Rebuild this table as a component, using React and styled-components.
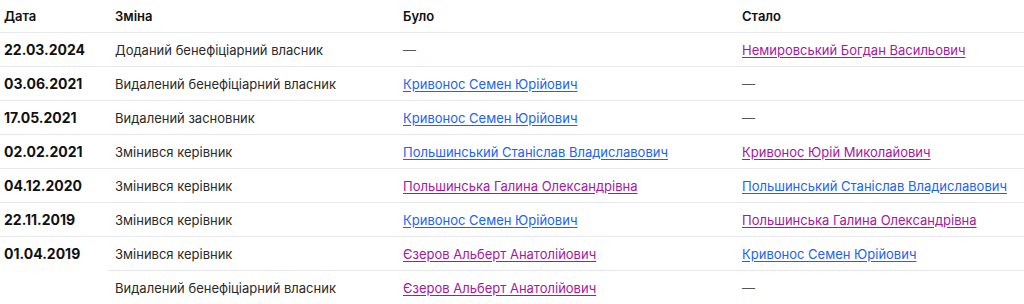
import React from "react";
import styled, { createGlobalStyle } from "styled-components";

const rows = [
  { date: "22.03.2024", change: "Доданий бенефіціарний власник", was: null, now: { name: "Немировський Богдан Васильович", visited: true } },
  { date: "03.06.2021", change: "Видалений бенефіціарний власник", was: { name: "Кривонос Семен Юрійович" }, now: null },
  { date: "17.05.2021", change: "Видалений засновник", was: { name: "Кривонос Семен Юрійович" }, now: null },
  { date: "02.02.2021", change: "Змінився керівник", was: { name: "Польшинський Станіслав Владиславович" }, now: { name: "Кривонос Юрій Миколайович", visited: true } },
  { date: "04.12.2020", change: "Змінився керівник", was: { name: "Польшинська Галина Олександрівна", visited: true }, now: { name: "Польшинський Станіслав Владиславович" } },
  { date: "22.11.2019", change: "Змінився керівник", was: { name: "Кривонос Семен Юрійович" }, now: { name: "Польшинська Галина Олександрівна", visited: true } },
  { date: "01.04.2019", span: 2, change: "Змінився керівник", was: { name: "Єзеров Альберт Анатолійович", visited: true }, now: { name: "Кривонос Семен Юрійович" } },
  { change: "Видалений бенефіціарний власник", was: { name: "Єзеров Альберт Анатолійович", visited: true }, now: null },
];

const GlobalStyle = createGlobalStyle`
  body {
    margin: 0;
    background: #fff;
    font-family: Inter, "Noto Sans", sans-serif;
    color: #1c1c1e;
  }
`;

const Table = styled.table`
  width: 1024px;
  border-collapse: collapse;
  table-layout: fixed;
  font-size: 13px;
`;

const HeadCell = styled.th`
  height: 32px;
  padding: 0 7px;
  text-align: left;
  font-weight: 600;
  color: #111;
  border-bottom: 1px solid #e6e8ec;
  &:first-child {
    padding-left: 4px;
  }
`;

const Cell = styled.td`
  height: 33px;
  padding: 0 7px;
  vertical-align: middle;
  color: #2a2a2a;
  border-bottom: ${(p) => (p.last ? "none" : "1px solid #e6e8ec")};
`;

const DateCell = styled(Cell)`
  padding-left: 4px;
  font-weight: 700;
  font-size: 14px;
  color: #111;
  vertical-align: ${(p) => (p.rowSpan > 1 ? "top" : "middle")};
  padding-top: ${(p) => (p.rowSpan > 1 ? "8px" : "0")};
`;

const PersonLink = styled.a`
  color: ${(p) => (p.$visited ? "#a7179f" : "#1b63f5")};
  text-decoration: underline;
  text-underline-offset: 2px;
  cursor: pointer;
`;

const Dash = styled.span`
  color: #555;
`;

const Person = ({ p }) =>
  p ? <PersonLink href="#" $visited={p.visited}>{p.name}</PersonLink> : <Dash>—</Dash>;

export default function App() {
  return (
    <>
      <GlobalStyle />
      <Table>
        <colgroup>
          <col style={{ width: 108 }} />
          <col style={{ width: 288 }} />
          <col style={{ width: 339 }} />
          <col />
        </colgroup>
        <thead>
          <tr>
            <HeadCell>Дата</HeadCell>
            <HeadCell>Зміна</HeadCell>
            <HeadCell>Було</HeadCell>
            <HeadCell>Стало</HeadCell>
          </tr>
        </thead>
        <tbody>
          {rows.map((r, i) => {
            const last = i === rows.length - 1;
            return (
              <tr key={i}>
                {r.date && (
                  <DateCell rowSpan={r.span || 1} last={r.span > 1 || last}>
                    {r.date}
                  </DateCell>
                )}
                <Cell last={last}>{r.change}</Cell>
                <Cell last={last}><Person p={r.was} /></Cell>
                <Cell last={last}><Person p={r.now} /></Cell>
              </tr>
            );
          })}
        </tbody>
      </Table>
    </>
  );
}
